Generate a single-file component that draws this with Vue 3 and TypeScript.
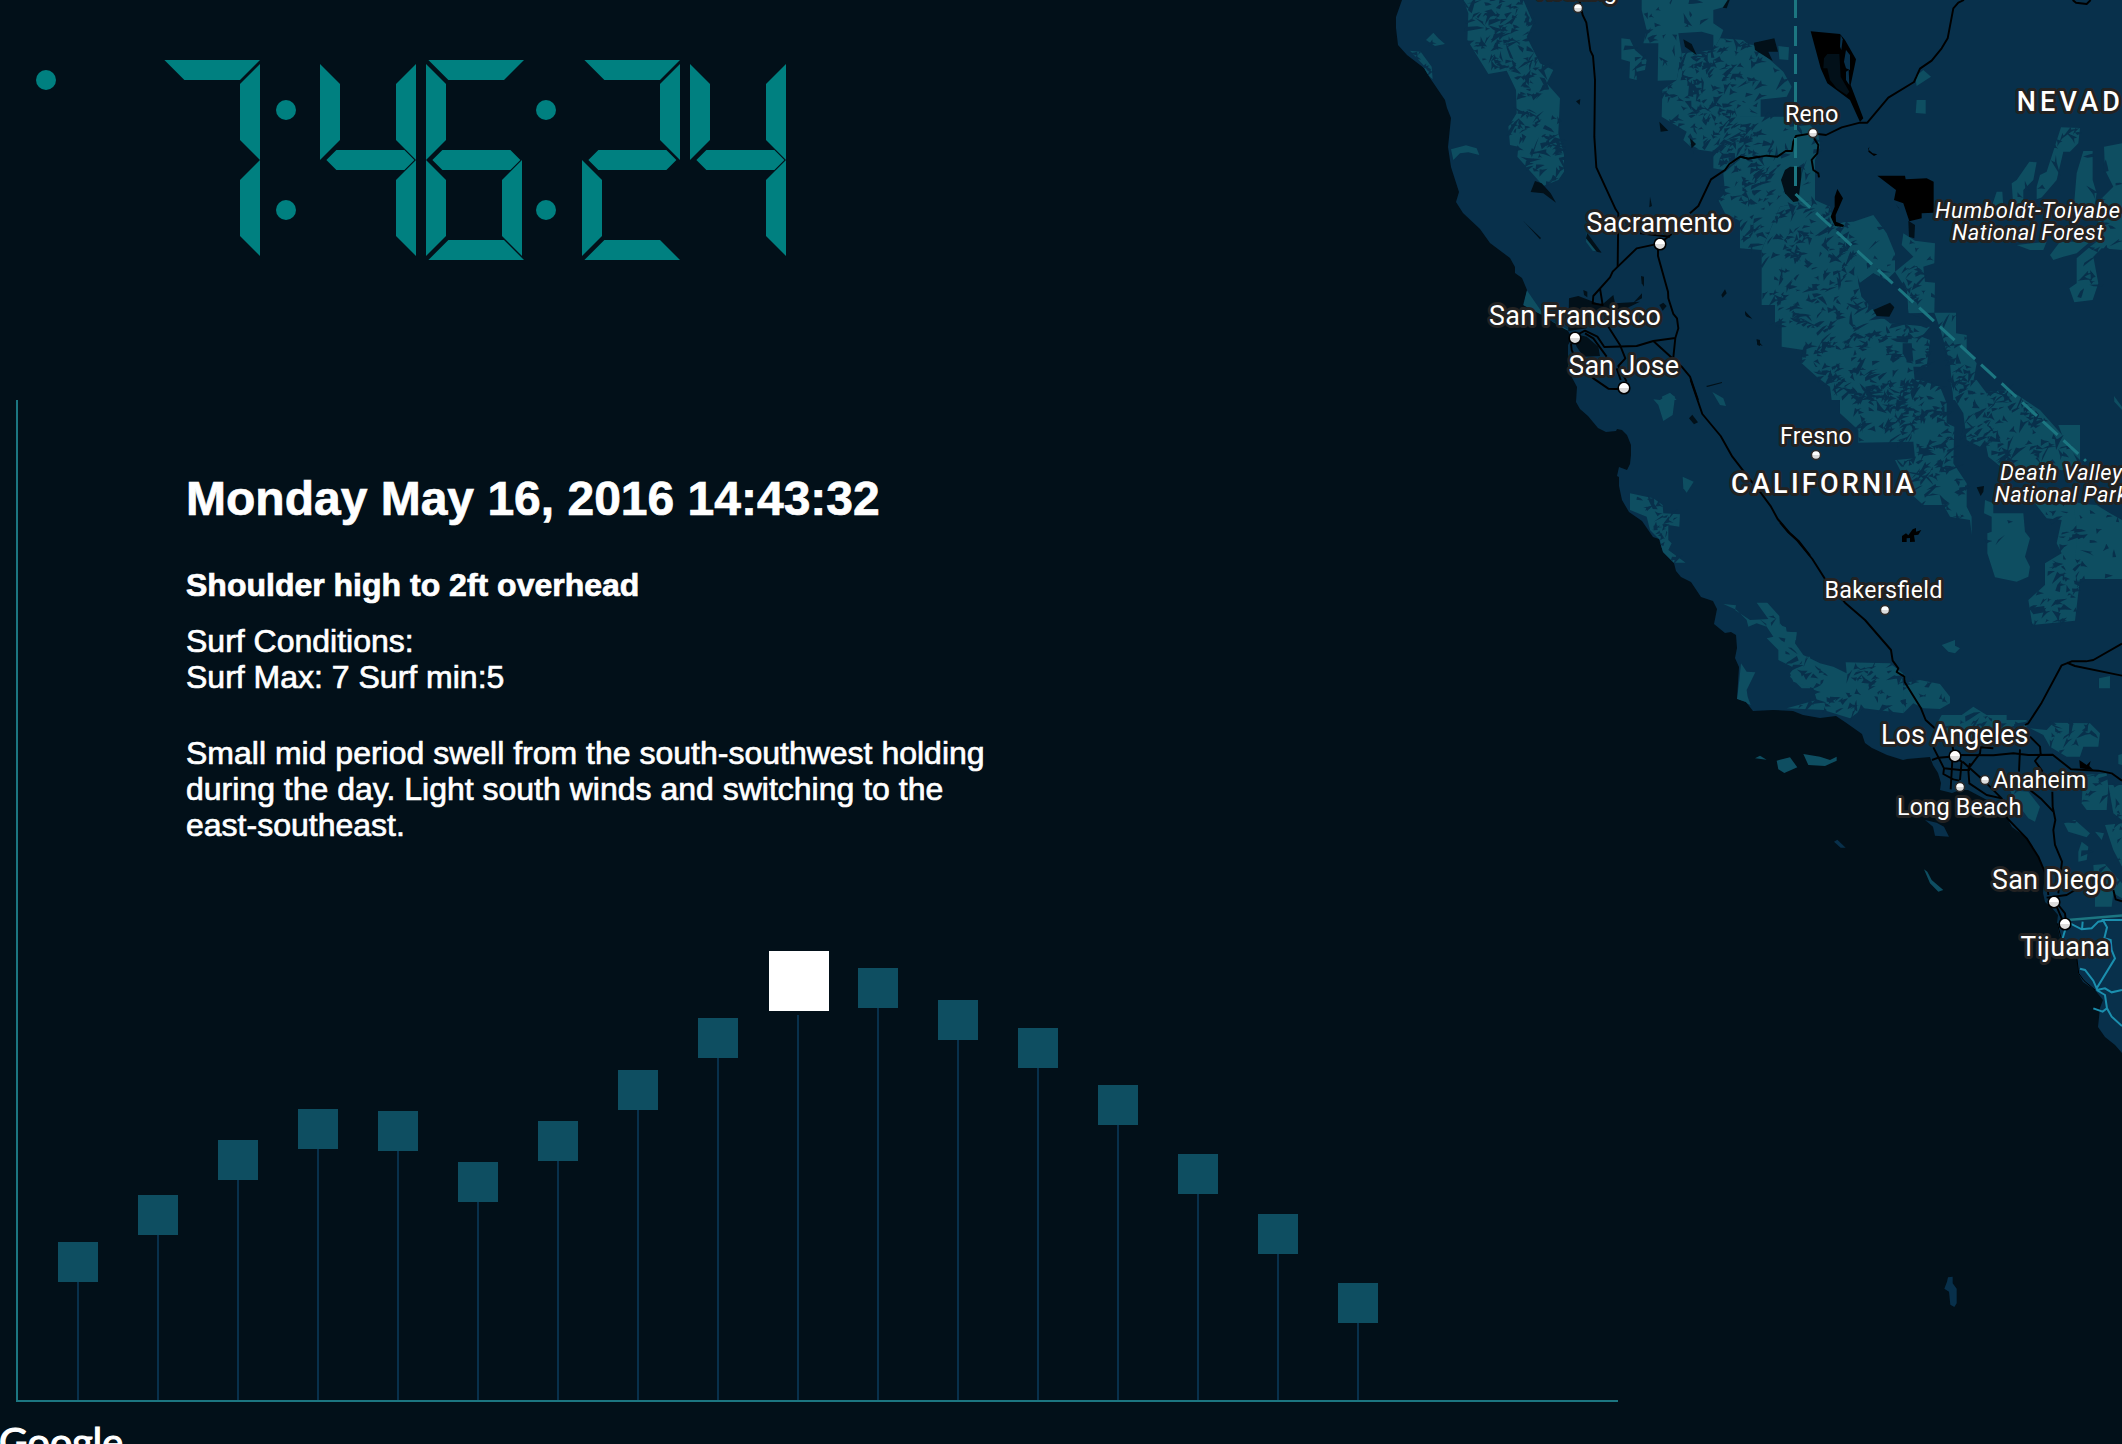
<script setup lang="ts">
type Tile = 'A' | 'B' | 'C' | 'D' | 'E'

interface Shape {
  tile: Tile
  pts: string
  grain?: number
}

interface Label {
  text: string
  x: number
  y: number
  w: number
  kind: 'major' | 'minor' | 'park' | 'state'
}

// Each map tile is drawn at a third of its own units, from its origin.
const origin: Record<Tile, [number, number]> = {
  A: [1380, 0],
  B: [1740, 0],
  C: [1480, 380],
  D: [1780, 380],
  E: [1720, 660],
}
const place = (t: Tile) => `translate(${origin[t][0]} ${origin[t][1]}) scale(0.33333)`

const coast =
  'M1402 0L1396 17L1396 28L1398 45L1407 55L1424 68L1430 78L1445 100L1447 108L1451 118L1448 147L1451 167L1459 192L1456 202L1463 213L1480 229L1490 243L1510 258L1515 267L1515 273L1522 278L1527 290L1523 305L1542 315L1553 322L1568 331L1572 338L1568 345L1568 370L1577 387L1576 402L1580 409L1588 416L1598 428L1606 432L1616 431L1617 429L1622 430L1627 435L1631 445L1631 455L1630 464L1627 470L1619 467L1617 476L1619 477L1619 486L1622 500L1629 512L1642 521L1653 537L1659 539L1663 552L1674 563L1676 571L1681 577L1691 582L1701 597L1713 601L1717 609L1714 624L1725 633L1731 632L1736 635L1737 648L1735 658L1739 667L1738 683L1737 699L1746 702L1753 711L1773 710L1793 711L1803 715L1820 718L1836 716L1845 722L1862 734L1865 743L1872 748L1887 755L1903 760L1907 759L1930 757L1933 765L1938 773L1941 783L1940 790L1952 793L1960 790L1968 790L1987 800L2007 818L2012 827L2027 838L2038 857L2045 873L2043 893L2045 902L2052 908L2058 915L2057 923L2060 938L2070 950L2077 957L2078 973L2083 982L2095 990L2103 1000L2100 1008L2098 1027L2105 1037L2115 1045L2122 1053L2122 0Z'

const parks: Shape[] = [
  { tile: 'A', grain: 1.1, pts: '250,0 265,40 262,120 325,222 380,212 408,270 410,340 385,380 390,435 415,440 412,470 490,558 535,540 552,515 552,465 535,400 540,295 500,250 520,210 480,190 440,110 460,70 430,0' },
  { tile: 'A', grain: 1, pts: '138,120 160,98 175,115 195,132 165,138' },
  { tile: 'A', grain: 0.8, pts: '90,152 122,155 155,200 158,238 133,215 130,195' },
  { tile: 'A', pts: '213,448 258,436 290,445 298,465 265,457 240,460 220,480' },
  { tile: 'A', grain: 0.5, pts: '724,115 750,118 765,150 800,180 795,210 770,215 770,240 748,235 750,185 724,178' },
  { tile: 'A', grain: 0.3, pts: '785,0 1045,0 1035,20 1000,30 1000,70 1030,90 1020,115 1000,150 1000,105 965,95 895,100 905,160 890,240 833,242 835,130 790,130 800,90 785,30' },
  { tile: 'A', grain: 1.1, pts: '1020,115 1090,120 1142,165 1142,470 1080,475 1030,510 1000,505 1000,455 940,447 910,420 920,395 845,350 847,270 890,240 905,160 1000,150' },
  { tile: 'A', grain: 0.9, pts: '1030,520 1080,478 1142,476 1142,748 1095,745 1080,720 1100,690 1075,660 1035,640 1015,600 1035,580' },
  { tile: 'A', pts: '440,870 485,935 485,950 520,965 570,992 540,985 485,948 430,917' },
  { tile: 'A', pts: '620,700 660,755 638,752 618,725' },
  { tile: 'A', grain: 0.4, pts: '845,1190 870,1178 890,1200 850,1200' },
  { tile: 'B', grain: 0.2, pts: '0,130 40,135 130,215 155,260 140,290 50,300 50,350 0,350' },
  { tile: 'B', grain: 0.45, pts: '0,350 135,350 150,380 210,375 235,400 240,440 225,480 225,600 120,620 65,750 0,745' },
  { tile: 'B', grain: 0.95, pts: '225,600 270,620 280,670 340,665 355,850 365,890 400,930 450,970 570,980 545,1010 570,1020 560,1100 520,1100 530,1200 275,1200 270,1160 230,1130 185,1090 190,1050 125,1040 125,970 105,970 105,915 65,915 65,750 120,620' },
  { tile: 'B', grain: 0.25, pts: '280,670 340,665 400,645 440,700 465,760 465,815 440,840 400,820 360,850 320,740' },
  { tile: 'B', grain: 0.7, pts: '465,815 520,770 485,735 490,700 525,722 585,730 583,790 550,800 555,845 585,848 583,938 505,940 500,870' },
  { tile: 'B', grain: 0.9, pts: '583,938 648,938 648,1000 680,1005 680,1050 710,1090 690,1200 640,1200 630,1090 600,985' },
  { tile: 'B', pts: '525,230 550,210 573,230 530,258' },
  { tile: 'B', pts: '530,300 557,300 557,341 527,339' },
  { tile: 'B', pts: '115,138 147,142 145,180 118,178' },
  { tile: 'B', grain: 0.5, pts: '963,382 1020,384 1015,430 990,455 970,455 950,540 890,610 890,560 900,525 920,515' },
  { tile: 'B', grain: 0.5, pts: '868,485 890,487 880,540 850,570 850,620 820,620 815,550 830,540' },
  { tile: 'B', grain: 0.3, pts: '1030,453 1058,453 1058,540 1070,580 1060,640 1000,640 1010,520' },
  { tile: 'B', grain: 0.3, pts: '1092,440 1146,430 1146,750 1085,745 1060,770 1075,850 1058,900 1003,907 988,865 1010,850 1010,775 1050,740 1090,710 1060,620 1120,560 1095,510' },
  { tile: 'B', pts: '930,765 960,725 1050,725 1010,760 970,770 940,780' },
  { tile: 'B', pts: '770,575 787,575 790,620 755,620' },
  { tile: 'B', pts: '830,735 920,725 910,750 870,750' },
  { tile: 'B', grain: 0.8, pts: '745,1175 800,1170 840,1200 745,1200' },
  { tile: 'C', pts: '520,58 540,60 570,40 585,50 578,105 550,123 535,75' },
  { tile: 'C', pts: '697,36 730,55 738,78 720,75' },
  { tile: 'C', pts: '608,290 641,305 620,338 610,325' },
  { tile: 'C', grain: 1, pts: '450,340 520,355 548,375 550,400 600,403 598,440 565,435 565,480 575,490 565,510 617,548 580,548 545,515 540,480 510,450 500,410 450,390' },
  { tile: 'C', grain: 0.15, pts: '730,672 768,676 765,690 810,720 865,717 830,668 862,668 898,708 900,735 918,742 920,755 950,757 948,780 930,785 970,830 990,830 990,925 965,925 930,890 945,865 895,840 895,810 875,790 860,775 880,770 860,740 830,730 805,740 800,720 770,690' },
  { tile: 'C', pts: '783,850 800,875 826,877 800,930 803,950 812,975 771,957 778,900' },
  { tile: 'D', grain: 1.1, pts: '150,0 180,50 180,100 235,150 235,188 400,185 405,235 345,240 365,280 380,330 430,375 490,375 510,410 570,420 575,465 575,410 560,380 560,310 520,250 523,140 500,130 500,70 480,20 420,0' },
  { tile: 'D', grain: 0.8, pts: '510,0 525,60 550,100 560,180 600,200 615,180 625,230 660,258 720,250 660,140 620,40 590,0' },
  { tile: 'D', grain: 0.8, pts: '620,40 690,30 780,90 820,135 860,180 900,260 800,280 700,258 655,255 625,210 610,150' },
  { tile: 'D', pts: '835,135 900,135 900,240 860,200' },
  { tile: 'D', grain: 0.7, pts: '765,370 880,365 950,380 900,440 900,597 885,722 757,735 745,660 795,615 795,550 845,520 830,490 845,420 800,415' },
  { tile: 'D', grain: 0.25, pts: '880,370 950,375 990,400 1026,420 1026,597 885,597 890,450' },
  { tile: 'D', grain: 0.1, pts: '615,360 640,370 640,400 730,400 735,455 750,475 735,530 750,560 745,590 710,605 645,592 622,520 622,460 635,455 635,410 612,400' },
  { tile: 'D', pts: '485,795 525,780 525,797 540,805 525,820 505,815' },
  { tile: 'D', pts: '957,895 990,888 990,925 957,925' },
  { tile: 'D', pts: '1002,48 1026,80 1026,90 1003,65' },
  { tile: 'D', grain: 0.65, pts: '0,730 20,755 50,757 45,790 70,825 120,850 160,860 200,880 197,847 330,850 375,885 380,910 370,1000 250,985 210,1015 130,990 20,985 110,960 100,925 40,905 30,880 45,860 0,840' },
  { tile: 'D', grain: 0.4, pts: '370,910 420,900 480,912 510,950 510,970 480,987 430,985 400,970 370,1000' },
  { tile: 'D', grain: 0.9, pts: '485,1005 545,1005 580,980 620,1005 680,1005 680,1020 740,1020 740,1040 700,1090 500,1080 460,1050' },
  { tile: 'D', grain: 0.6, pts: '750,1045 800,1050 820,1028 930,1030 960,1060 955,1100 910,1100 900,1130 860,1130 810,1100 790,1065' },
  { tile: 'E', grain: 0.3, pts: '870,390 925,395 960,440 945,485 925,475 880,415' },
  { tile: 'E', grain: 0.8, pts: '1032,490 1065,480 1110,520 1100,532 1045,515' },
  { tile: 'E', grain: 0.5, pts: '1090,345 1160,340 1165,380 1160,450 1100,450 1085,430' },
  { tile: 'E', grain: 0.5, pts: '1165,375 1206,375 1206,480 1180,460' },
  { tile: 'E', grain: 0.3, pts: '1075,575 1085,545 1105,560 1100,600 1075,605' },
  { tile: 'E', pts: '1125,515 1152,520 1145,540' },
  { tile: 'E', grain: 0.9, pts: '1155,495 1206,490 1206,620 1180,570' },
  { tile: 'E', grain: 0.3, pts: '1120,615 1155,612 1206,670 1206,715 1180,700 1175,740 1125,740 1125,700' },
  { tile: 'E', pts: '1195,285 1206,282 1206,315 1195,312' },
]

const holes: Shape[] = [
  { tile: 'B', pts: '358,850 400,820 440,850 500,870 505,940 580,968 560,985 520,970 450,970 440,905 400,915 365,890' },
  { tile: 'B', pts: '488,1030 515,1030 520,1085 500,1080 488,1060' },
  { tile: 'B', pts: '470,1008 515,1010 515,1018 470,1015' },
  { tile: 'D', pts: '747,685 793,678 793,697 760,703' },
]

const lakes: Shape[] = [
  { tile: 'A', pts: '465,543 485,550 512,580 528,608 490,580 452,576' },
  { tile: 'A', pts: '910,118 935,132 950,165 915,140' },
  { tile: 'A', pts: '588,304 601,297 599,315' },
  { tile: 'A', pts: '838,365 865,392 842,395' },
  { tile: 'A', pts: '930,415 948,432 935,445' },
  { tile: 'A', pts: '810,590 816,618 808,622' },
  { tile: 'A', pts: '622,700 665,758 650,755 618,715' },
  { tile: 'A', pts: '430,663 483,714 480,718' },
  { tile: 'A', pts: '567,895 595,888 640,905 665,915 700,885 705,910 780,905 740,925 640,935 620,985 565,993' },
  { tile: 'A', pts: '575,1000 620,1010 655,1040 660,1068 610,1070 590,1040' },
  { tile: 'A', pts: '610,870 622,875 622,892 612,885' },
  { tile: 'A', pts: '783,828 792,830 792,860 785,850' },
  { tile: 'A', pts: '786,880 786,895 760,908' },
  { tile: 'A', pts: '838,915 850,908 860,918 848,932' },
  { tile: 'A', pts: '1035,868 1040,880 1028,893 1024,885' },
  { tile: 'A', pts: '1095,935 1115,955 1100,950' },
  { tile: 'A', pts: '1130,1018 1140,1020 1140,1038 1132,1035' },
  { tile: 'A', pts: '1122,130 1140,125 1140,155 1128,148' },
  { tile: 'A', pts: '1043,0 1049,0 1040,25 1028,23' },
  { tile: 'B', pts: '42,128 103,115 114,155 85,155 98,183 45,150' },
  { tile: 'B', pts: '150,500 184,502 184,530 175,604 160,606 135,580 123,540 135,510' },
  { tile: 'B', pts: '400,930 450,908 463,922 448,950 410,948' },
  { tile: 'B', pts: '505,662 525,675 523,715 507,710' },
  { tile: 'B', pts: '15,933 37,958 16,946' },
  { tile: 'B', pts: '50,1018 68,1038 52,1032' },
  { tile: 'C', pts: '627,115 637,104 654,127 642,133' },
  { tile: 'C', pts: '678,18 726,6 726,9 682,21' },
  { tile: 'D', pts: '590,322 612,318 610,335 602,348' },
]

const urban: Shape[] = [
  { tile: 'B', pts: '212,94 300,102 315,120 348,178 332,255 370,355 360,366 330,300 262,250 242,205' },
  { tile: 'B', pts: '412,527 495,527 497,538 560,535 581,545 581,638 545,640 545,655 508,664 490,610 462,600 468,570' },
  { tile: 'B', pts: '292,567 309,595 287,645 288,665 312,675 310,681 285,678 272,650 284,620 284,590' },
  { tile: 'B', pts: '388,440 384,448 398,460 412,463 402,468 385,455' },
  { tile: 'B', pts: '468,612 480,630 474,622' },
  { tile: 'D', pts: '366,468 378,460 385,466 398,448 408,444 408,455 424,450 415,464 402,466 405,485 390,486 390,474 380,475 380,486 366,486' },
  { tile: 'E', pts: '1078,300 1100,315 1112,303 1108,318 1120,330 1080,325' },
]

const bare: Shape[] = [
  { tile: 'B', pts: '318,150 330,165 330,210 318,205 312,185' },
  { tile: 'B', pts: '302,105 308,118 304,150 300,140' },
  { tile: 'B', pts: '318,215 326,210 328,255 318,240' },
]

const dryLake = '262,162 298,162 302,230 328,275 320,285 290,265 270,240 262,205 250,205 252,175'

const islands: Shape[] = [
  { tile: 'E', pts: '105,295 120,287 140,299' },
  { tile: 'E', pts: '170,302 210,292 232,322 193,339 175,328' },
  { tile: 'E', pts: '250,282 300,290 330,300 350,290 350,302 315,318 265,315' },
  { tile: 'E', pts: '612,628 622,635 635,660 670,690 655,695 630,670' },
]

const plainIslands: Shape[] = [
  { tile: 'E', pts: '615,480 650,488 672,500 687,530 645,527 639,500' },
  { tile: 'E', pts: '342,545 352,539 377,563 362,563' },
  { tile: 'E', pts: '684,1852 698,1850 698,1870 710,1886 710,1930 703,1941 691,1934 687,1895 673,1886 681,1865' },
]

const roads: { tile: Tile; d: string }[] = [
  { tile: 'A', d: 'M598 0L608 45L619 68L631 152L639 168L645 240L643 410L649 502L707 628L715 640L713 800' },
  { tile: 'A', d: 'M1140 470L1104 476L1081 470L1048 492L1035 510L993 538L955 618L930 640M875 702L840 730L770 745L698 815L690 832L640 888L638 910L668 915L660 865' },
  { tile: 'A', d: 'M834 745L834 768L864 875L865 895L880 942L891 955L895 985L886 1014L880 1072M886 1014L820 1023L770 1038L673 1041L652 1010L615 992L590 1005' },
  { tile: 'A', d: 'M820 1023L905 1100L930 1130L954 1200M685 980L720 1035L736 1075L715 1098L740 1145M615 1000L640 1015L680 1070M573 1030L575 1050L600 1105L640 1135L685 1166L730 1168M710 1105L722 1140M780 700L825 705L870 710' },
  { tile: 'B', d: 'M0 470L25 476L80 467L112 470L137 453L156 453L160 425L168 408L215 400L258 405L305 382L360 368L382 368L445 293L522 246L540 206L575 182L605 145L623 115L640 25L655 8L672 0M222 415L235 435L232 460L215 480L220 510L235 520L237 532M998 0L1008 8L1040 12L1052 0' },
  { tile: 'C', d: 'M632 0L667 102L722 168L757 230L815 305L842 338L873 380L893 417L930 460L955 482L990 527' },
  { tile: 'D', d: 'M0 427L25 457L52 482L97 537L137 600L195 668L255 720L333 810L338 842L355 865L350 876L373 890L374 906L423 985L437 1020L470 1050' },
  { tile: 'D', d: 'M1026 791L940 840L918 844L875 844L845 856L785 968L745 1030L735 1035M860 848L885 858L1026 887' },
  { tile: 'E', d: 'M640 262L672 325L720 330L750 330M636 300L655 293L690 290M705 285L820 286L880 280L925 285L998 284L1053 328L1135 332L1175 340L1206 362M900 268L897 335M930 230L960 260L962 282L945 303L968 335' },
  { tile: 'E', d: 'M697 255L703 290L725 305L720 360M697 300L692 388M672 325L670 342L700 358L718 362M728 305L800 370L845 415L862 475L920 535L955 590L978 645L985 705M750 310L745 330L748 370L800 405L845 415M750 320L780 280L782 262L820 265M997 395L998 440L1006 480L1000 510L1005 555L1026 605L1015 700M930 390L965 418L1000 455' },
  { tile: 'E', d: 'M980 713L1040 705L1065 690M1180 690L1187 718L1206 724M1010 740L1025 775L1035 790M1015 735L1035 760L1038 785' },
]

const mexicoRoads =
  'M1040 785L1085 808L1115 805L1135 785L1150 782L1161 802L1153 835L1172 840L1175 870L1185 895L1130 985L1120 962L1095 930L1080 926M1088 785L1086 808M1145 780L1206 780M1130 990L1155 985L1175 997L1206 990M1130 990L1155 1005L1161 1045L1175 1070L1206 1098M1120 1045L1148 1055L1161 1045M1040 795L1028 835'

const cities: { x: number; y: number; big?: boolean }[] = [
  { x: 1578, y: 8 },
  { x: 1813, y: 133 },
  { x: 1660, y: 244, big: true },
  { x: 1575, y: 338, big: true },
  { x: 1624, y: 388, big: true },
  { x: 1816, y: 455 },
  { x: 1885, y: 610 },
  { x: 1955, y: 756, big: true },
  { x: 1985, y: 780 },
  { x: 1960, y: 787 },
  { x: 2054, y: 902, big: true },
  { x: 2065, y: 924, big: true },
]

const labels: Label[] = [
  { text: 'Redding', x: 1537, y: -1, w: 80, kind: 'minor' },
  { text: 'Reno', x: 1785, y: 122, w: 53.5, kind: 'minor' },
  { text: 'Sacramento', x: 1586.5, y: 232, w: 146, kind: 'major' },
  { text: 'San Francisco', x: 1489, y: 325, w: 172, kind: 'major' },
  { text: 'San Jose', x: 1568.5, y: 375, w: 110.5, kind: 'major' },
  { text: 'Fresno', x: 1780, y: 444, w: 72, kind: 'minor' },
  { text: 'Bakersfield', x: 1824.5, y: 598, w: 118, kind: 'minor' },
  { text: 'Los Angeles', x: 1881, y: 744, w: 147.5, kind: 'major' },
  { text: 'Anaheim', x: 1993.3, y: 788, w: 93, kind: 'minor' },
  { text: 'Long Beach', x: 1897, y: 815, w: 124.5, kind: 'minor' },
  { text: 'San Diego', x: 1992, y: 889, w: 123, kind: 'major' },
  { text: 'Tijuana', x: 2020.5, y: 956, w: 89.500, kind: 'major' },
  { text: 'NEVADA', x: 2016.7, y: 111, w: 125, kind: 'state' },
  { text: 'CALIFORNIA', x: 1731, y: 493, w: 182.5, kind: 'state' },
  { text: 'Humboldt-Toiyabe', x: 1935, y: 218, w: 185, kind: 'park' },
  { text: 'National Forest', x: 1952, y: 240, w: 151.5, kind: 'park' },
  { text: 'Death Valley', x: 2000, y: 480, w: 122, kind: 'park' },
  { text: 'National Park', x: 1994.5, y: 502, w: 133, kind: 'park' },
]

// Terrain grain: seeded slivers of bare land scattered in patches inside each park.
let seed = 20160516
const rand = () => {
  seed = (seed * 1664525 + 1013904223) % 4294967296
  return seed / 4294967296
}
const inside = (x: number, y: number, p: number[][]) => {
  let hit = false
  for (let i = 0, j = p.length - 1; i < p.length; j = i++) {
    const [xi, yi] = p[i]
    const [xj, yj] = p[j]
    if (yi > y !== yj > y && x < ((xj - xi) * (y - yi)) / (yj - yi) + xi) hit = !hit
  }
  return hit
}
const slivers = (s: Shape) => {
  const p = s.pts.split(' ').map((q) => q.split(',').map(Number))
  const xs = p.map((q) => q[0])
  const ys = p.map((q) => q[1])
  const x0 = Math.min(...xs)
  const y0 = Math.min(...ys)
  const w = Math.max(...xs) - x0
  const h = Math.max(...ys) - y0
  const n = Math.round(((w * h) / 300) * (s.grain ?? 0))
  let d = ''
  for (let i = 0; i < n; i++) {
    const x = x0 + rand() * w
    const y = y0 + rand() * h
    const patch = 0.66 + 0.6 * Math.sin(x / 31 + Math.sin(y / 23) * 1.7) * Math.cos(y / 37 - x / 61)
    if (rand() > patch || !inside(x, y, p)) continue
    const a = rand() < 0.6 ? -0.2 - rand() * 1.1 : rand() * 6.28
    const len = 12 + rand() * rand() * 56
    const t = 3 + rand() * 11
    const c = Math.cos(a)
    const k = Math.sin(a)
    const m = rand() * 0.8 - 0.4
    const pt = (u: number, v: number) => `${(x + u * c - v * k).toFixed(1)} ${(y + u * k + v * c).toFixed(1)}`
    d += `M${pt(-len / 2, 0)}L${pt(len * m, -t)}L${pt(len * 0.2, -t * 0.2)}L${pt(len / 2, t * 0.8)}L${pt(len * m * 0.5, t * 0.3)}Z`
  }
  return d
}
const grain = parks.filter((s) => s.grain).map((s) => ({ tile: s.tile, d: slivers(s) }))

// Seven-segment clock.
const segments: Record<string, (l: number, r: number) => string> = {
  a: (l) => `${l + 2.4},60 ${l + 98},60 ${l + 78},80 ${l + 22.4},80`,
  b: (_, r) => `${r},64 ${r},160 ${r - 20},140 ${r - 20},84`,
  c: (_, r) => `${r},160 ${r},256 ${r - 20},236 ${r - 20},180`,
  d: (l) => `${l + 22.4},240 ${l + 78},240 ${l + 98},260 ${l + 2.4},260`,
  e: (l) => `${l},160 ${l + 20},180 ${l + 20},236 ${l},256`,
  f: (l) => `${l},64 ${l + 20},84 ${l + 20},140 ${l},160`,
  g: (l) => `${l + 6.4},160 ${l + 16.4},150 ${l + 84.4},150 ${l + 94.4},160 ${l + 84.4},170 ${l + 16.4},170`,
}
const digits = [
  { left: 162, right: 260, on: 'abc' },
  { left: 320, right: 416, on: 'bcfg' },
  { left: 426, right: 522, on: 'acdefg' },
  { left: 582, right: 680, on: 'abdeg' },
  { left: 690, right: 786, on: 'bcfg' },
]
const lit = digits.flatMap((n) => [...n.on].map((s) => segments[s](n.left, n.right)))
const dots = [[46, 80], [286, 110], [286, 210], [546, 110], [546, 210]]

// Stem heights in pixels above the axis.
const swell = [118.4, 165, 219.7, 250.8, 249, 198.4, 238.7, 289.7, 341.6, 385, 391.8, 359.8, 331.8, 275, 206, 146.4, 76.8]
const active = 9
</script>

<template>
  <main class="screen">
    <svg class="map" viewBox="0 0 2122 1444" width="2122" height="1444">
      <defs>
        <clipPath id="land"><path :d="coast" /></clipPath>
        <linearGradient id="pin" x1="0" y1="0" x2="0" y2="1">
          <stop offset="0.5" stop-color="#fff" />
          <stop offset="0.5" stop-color="#dcdcdc" />
        </linearGradient>
      </defs>
      <path :d="coast" fill="#08304b" />
      <g clip-path="url(#land)">
        <g fill="#0e4e61">
          <polygon v-for="(s, i) in parks" :key="i" :points="s.pts" :transform="place(s.tile)" />
        </g>
        <g fill="#08304b">
          <path v-for="(s, i) in grain" :key="i" :d="s.d" :transform="place(s.tile)" />
          <polygon v-for="(s, i) in holes" :key="'h' + i" :points="s.pts" :transform="place(s.tile)" />
        </g>
      </g>
      <g fill="#021019">
        <polygon v-for="(s, i) in lakes" :key="i" :points="s.pts" :transform="place(s.tile)" />
      </g>
      <g fill="#000">
        <polygon v-for="(s, i) in urban" :key="i" :points="s.pts" :transform="place(s.tile)" />
      </g>
      <g fill="#08304b">
        <polygon v-for="(s, i) in bare" :key="i" :points="s.pts" :transform="place(s.tile)" />
        <polygon v-for="(s, i) in plainIslands" :key="'p' + i" :points="s.pts" :transform="place(s.tile)" />
      </g>
      <polygon :points="dryLake" :transform="place('B')" fill="#021019" />
      <g fill="#0e4e61">
        <polygon v-for="(s, i) in islands" :key="i" :points="s.pts" :transform="place(s.tile)" />
      </g>

      <g fill="none" stroke="#000" stroke-width="5.8" stroke-linejoin="round">
        <path v-for="(r, i) in roads" :key="i" :d="r.d" :transform="place(r.tile)" />
        <path d="M1012 790L1030 860L1070 890L1076 940L1092 962L1125 990" :transform="place('E')" stroke-width="3" />
      </g>
      <path :d="mexicoRoads" :transform="place('E')" fill="none" stroke="#1b8fae" stroke-width="6" />
      <g fill="none" stroke="#1c7681" stroke-width="3">
        <path d="M1795.500 -2V186" stroke-dasharray="20 8" />
        <path d="M1795.500 194L2086 461" stroke-dasharray="20 8" />
        <path d="M2068 920L2122 915.500" stroke-width="2.600" />
      </g>

      <circle
        v-for="(c, i) in cities"
        :key="i"
        :cx="c.x"
        :cy="c.y"
        :r="c.big ? 5.8 : 4.6"
        fill="url(#pin)"
        :stroke="c.big ? '#000' : '#2b2b2b'"
        stroke-width="1.600"
      />
      <text
        v-for="l in labels"
        :key="l.text"
        :class="['label', l.kind]"
        :x="l.x"
        :y="l.y"
        :textLength="l.w"
      >{{ l.text }}</text>
      <text class="brand" x="-1" y="1456" textLength="124" lengthAdjust="spacingAndGlyphs">Google</text>
    </svg>

    <svg class="clock" viewBox="0 0 820 400" width="820" height="400">
      <polygon v-for="(p, i) in lit" :key="i" :points="p" />
      <circle v-for="([x, y], i) in dots" :key="'d' + i" :cx="x" :cy="y" r="10" />
    </svg>

    <section class="chart">
      <div class="forecast">
        <h1>Monday May 16, 2016 14:43:32</h1>
        <h2>Shoulder high to 2ft overhead</h2>
        <p>Surf Conditions:<br />Surf Max: 7 Surf min:5</p>
        <p class="summary">
          Small mid period swell from the south-southwest holding<br />
          during the day. Light south winds and switching to the<br />
          east-southeast.
        </p>
      </div>
      <div class="bars">
        <div v-for="(h, i) in swell" :key="i" :class="['bar', { active: i === active }]">
          <span class="marker"></span>
          <span class="stem" :style="{ height: h + 'px' }"></span>
        </div>
      </div>
    </section>
  </main>
</template>

<style>
body {
  margin: 0;
  background: #021019;
  overflow: hidden;
}
</style>

<style scoped>
.screen {
  position: relative;
  width: 2122px;
  height: 1444px;
  overflow: hidden;
  background: #021019;
  color: #fff;
  font-family: "Liberation Sans", Arial, sans-serif;
}
.map {
  position: absolute;
  inset: 0;
}
.label {
  font-family: Roboto, sans-serif;
  fill: #fff;
  stroke: #222;
  stroke-width: 6px;
  stroke-linejoin: round;
  paint-order: stroke;
}
.major {
  font-size: 27px;
}
.minor {
  font-size: 23.5px;
}
.park {
  font-size: 22px;
  font-style: italic;
}
.state {
  font-size: 27px;
  font-weight: 500;
}
.brand {
  font-family: Lato, sans-serif;
  font-size: 39px;
  font-weight: 400;
  fill: #fff;
  stroke: #fff;
  stroke-width: 1.2px;
}
.clock {
  position: relative;
  display: block;
  fill: #008080;
}
.chart {
  position: relative;
  box-sizing: border-box;
  display: flex;
  flex-direction: column;
  justify-content: space-between;
  width: 1602px;
  height: 1002px;
  margin-left: 16px;
  border-left: 2px solid #1c7681;
  border-bottom: 2px solid #1c7681;
}
.forecast {
  padding: 72px 0 0 168px;
  font-size: 32px;
  line-height: 36px;
  white-space: nowrap;
  -webkit-text-stroke: 0.7px #fff;
}
h1 {
  margin: 0;
  font-size: 48px;
  line-height: 54px;
}
h2 {
  margin: 41px 0 20px;
  font-size: 32px;
  line-height: 36px;
}
p {
  margin: 0;
}
.summary {
  margin-top: 40px;
}
.bars {
  display: flex;
  align-items: flex-end;
  padding-left: 20px;
}
.bar {
  display: flex;
  flex-direction: column;
  align-items: center;
  width: 80px;
}
.marker {
  width: 40px;
  height: 40px;
  background: #0e4e61;
}
.stem {
  width: 2px;
  background: #08304b;
}
.active .marker {
  width: 60px;
  height: 60px;
  margin: 0 0 4px 2px;
  background: #fff;
}
</style>
